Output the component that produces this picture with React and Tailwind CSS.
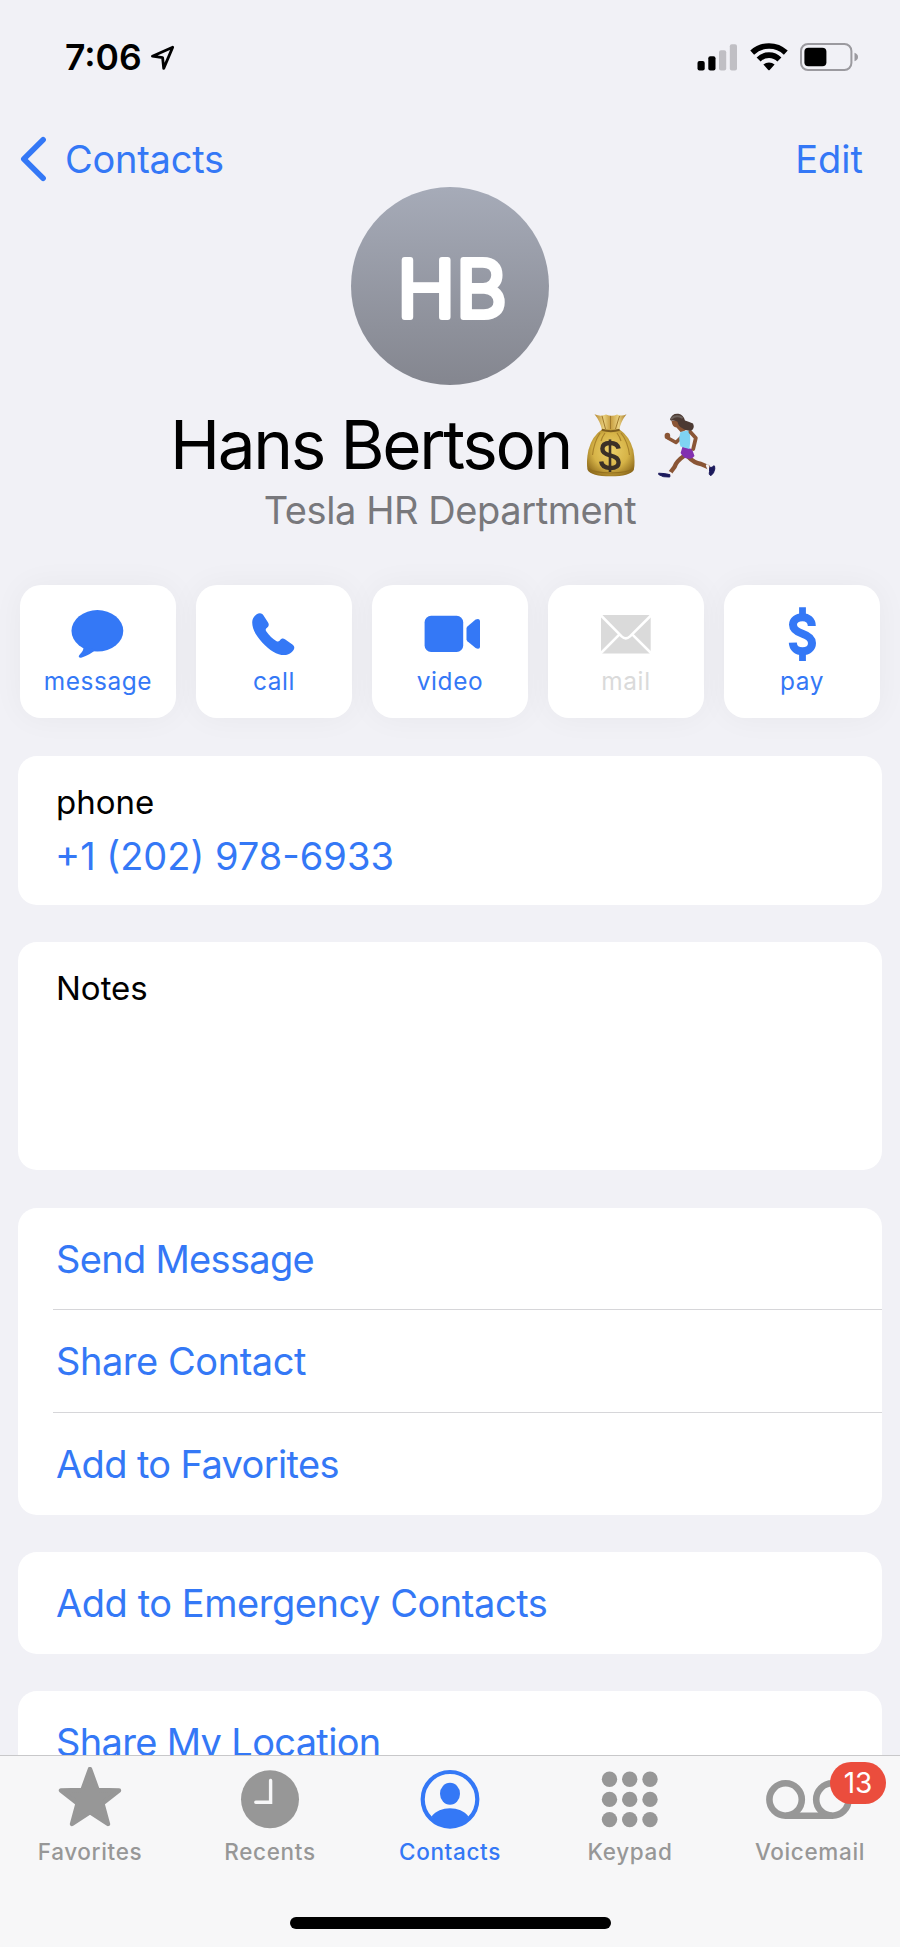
const BLUE = '#3478f6';

function LocationArrow() {
  return (
    <svg className="ml-[8px] h-[27px] w-[26px]" viewBox="0 0 26 27" fill="none" stroke="#000" strokeWidth="2.8" strokeLinejoin="round">
      <path d="M22.7 2.2 L2.4 11.2 L12.6 12.6 L13.7 23.4 Z" />
    </svg>
  );
}

function Signal() {
  return (
    <svg className="h-[28px] w-[41px]" viewBox="0 0 41 28">
      <rect x="0.5" y="18" width="7.2" height="9.5" rx="2" fill="#000" />
      <rect x="11.3" y="13.3" width="7.2" height="14.2" rx="2" fill="#000" />
      <rect x="22" y="7.3" width="7.2" height="20.2" rx="2" fill="#c0bfc4" />
      <rect x="32.8" y="1.2" width="7.2" height="26.3" rx="2" fill="#c0bfc4" />
    </svg>
  );
}

function Wifi() {
  return (
    <svg className="ml-[12px] h-[28px] w-[38px]" viewBox="0 0 38 28" fill="none" stroke="#000" strokeWidth="5.6">
      <path d="M2.2 9.6 A24.5 24.5 0 0 1 35.8 9.6" />
      <path d="M8.6 16.5 A14.6 14.6 0 0 1 29.4 16.5" />
      <path d="M13.4 21.6 A8.2 8.2 0 0 1 24.6 21.6 L19.7 26.9 Q19 27.6 18.3 26.9 Z" fill="#000" stroke="none" />
    </svg>
  );
}

function Battery() {
  return (
    <svg className="ml-[12px] h-[28px] w-[59px]" viewBox="0 0 59 28">
      <rect x="1" y="1" width="50.4" height="26" rx="7" fill="none" stroke="#9b9a9f" strokeWidth="2" />
      <rect x="4.4" y="4.7" width="22" height="18.6" rx="4" fill="#000" />
      <path d="M54.5 9.8 Q58 11 58 14 Q58 17 54.5 18.2 Z" fill="#9b9a9f" />
    </svg>
  );
}

function MoneyBag() {
  return (
    <svg className="ml-[14px] h-[66px] w-[52px] shrink-0" viewBox="0 0 52 66">
      <defs>
        <radialGradient id="bag" cx="0.5" cy="0.45" r="0.62">
          <stop offset="0" stopColor="#ecd068" />
          <stop offset="0.6" stopColor="#d6b347" />
          <stop offset="1" stopColor="#8f6b1c" />
        </radialGradient>
        <linearGradient id="neck" x1="0" x2="1">
          <stop offset="0" stopColor="#b78a35" />
          <stop offset="0.3" stopColor="#e8cf7c" />
          <stop offset="0.5" stopColor="#c79d3f" />
          <stop offset="0.75" stopColor="#ead17f" />
          <stop offset="1" stopColor="#a87c2b" />
        </linearGradient>
      </defs>
      <path d="M9.5 2.3 Q16 5 21 2.6 Q27 5 32 2.6 Q37 4.5 41.5 2.3 Q36 9 34.2 18 L17 18 Q15 9 9.5 2.3 Z" fill="url(#neck)" />
      <path d="M17 3.8 L20.5 17 M25.5 4 L25.5 17 M34.5 4 L30.5 17" stroke="#a17a2c" strokeWidth="1" fill="none" />
      <path d="M17 17.5 L34.5 17.5 Q44.5 24 48.3 38 Q50.5 50 48.8 58 Q45 64.3 25.7 64.3 Q6 64.3 2.6 58 Q1 50 3.4 38 Q7 24 17 17.5 Z" fill="url(#bag)" />
      <path d="M16.8 17.8 Q26 20.5 34.6 17.8" stroke="#7d5d1f" strokeWidth="2" fill="none" />
      <path d="M15 21 Q9 30 7.5 43 M36 21 Q43 30 44.5 43 M20 21 Q17 25 16 29 M32 21 Q35 25 36 29" stroke="#a9832b" strokeWidth="1.2" fill="none" />
      <path d="M3 56 Q8 61 25.7 61 Q43 61 48.6 56" stroke="#94701f" strokeWidth="1.2" fill="none" />
      <g fill="none" stroke="#3b3127">
        <path d="M33.6 36.6 Q32.4 31 25 31 Q17.4 31 17.4 36.8 Q17.4 41.6 25 43.4 Q33.6 45.2 33.6 50.4 Q33.6 56 25.2 56 Q17 56 16.2 49.6" strokeWidth="4.4" />
        <path d="M25 27.4 V60" strokeWidth="2.6" />
      </g>
    </svg>
  );
}

function Runner() {
  return (
    <svg className="ml-[21px] h-[66px] w-[60px] shrink-0" viewBox="0 0 60 66" fill="none" strokeLinecap="round" strokeLinejoin="round">
      <path d="M24.5 24 L18 30.5 L10 26" stroke="#8a5535" strokeWidth="3.6" />
      <ellipse cx="9.4" cy="24" rx="2.8" ry="3.2" fill="#8a5535" />
      <path d="M26 44 Q18.5 49 16.5 55 L12 61" stroke="#8a5535" strokeWidth="4.4" />
      <path d="M30 44.5 Q36 51 43 52 L50 55" stroke="#8a5535" strokeWidth="4.4" />
      <path d="M10.5 60.5 L13 62 M49.3 53.6 L50.8 57" stroke="#f4f2f5" strokeWidth="2.8" />
      <path d="M1 61.2 Q6 61.2 11.8 62.6 L11.8 65 Q5 65.6 1 62.8 Z" fill="#1c1a5c" stroke="#1c1a5c" strokeWidth="1" />
      <path d="M52 55.5 Q54.6 56 55.6 53.8 Q57 53 56.8 57 Q56 61.5 53.2 63.4 Q50.6 63.6 51.4 60 Z" fill="#1c1a5c" stroke="#1c1a5c" strokeWidth="1" />
      <path d="M24.5 34.8 L34 37 L36.5 44 Q34 47.5 30.5 46.5 Q26 47 22.6 41 Z" fill="#8230b0" />
      <path d="M22.5 19.5 L31.5 18.5 Q33 26 31.4 37 L22.5 34.4 Q20 28 22.5 19.5 Z" fill="#7fd3f2" />
      <path d="M32.4 20 L37.8 26 L35.2 37" stroke="#8a5535" strokeWidth="3.8" />
      <path d="M13.5 9 Q14.5 15.5 18.5 15.5 L22.5 20 L27.5 18.4 L24 7 Z" fill="#8a5535" />
      <path d="M12 7.5 Q14 1 20.5 1.8 Q25.5 3 27 8.5 Q31.5 10 35 11.5 Q37 16 33.5 18.6 Q28 19.5 24 16 Q20.5 14.5 19.5 9.8 Q16 8 13 8.8 Z" fill="#4c3a33" />
      <path d="M13.5 6.5 Q18 2.6 24 5.6" stroke="#6d625c" strokeWidth="2" />
    </svg>
  );
}

function MessageIcon() {
  return (
    <svg className="h-[60px] w-[60px]" viewBox="0 0 60 60" fill={BLUE}>
      <ellipse cx="29.4" cy="26.8" rx="25.9" ry="20.7" />
      <path d="M15.5 43.5 C15.5 47 13 49 11.2 51.2 C10 53 11.4 54.2 13.8 53.5 C19 52 24 49 28 45.5 Z" />
    </svg>
  );
}

function PhoneIcon() {
  return (
    <svg className="h-[60px] w-[60px]" viewBox="0 0 60 60" fill={BLUE}>
      <path d="M15.8 9.2 C12.3 9.3 8.2 13.6 8.2 18.2 C8.2 24.5 11.5 31.2 18.2 38.4 C25.5 46.2 33 51 40.2 51 C45 51 50.2 47.2 50.3 43.7 C50.3 42.3 49.6 41.2 48.4 40.4 L41.3 35.5 C38.9 34 37.6 34.4 35.8 36.4 C34.8 37.5 33.9 38 32.6 37.2 C28.6 34.8 25.2 31.4 22.2 27.2 C21.3 25.9 21.7 25 22.7 24.1 C24.9 22.2 25.4 20.6 23.9 18.2 L19.2 11 C18.3 9.8 17.2 9.1 15.8 9.2 Z" />
    </svg>
  );
}

function VideoIcon() {
  return (
    <svg className="h-[60px] w-[60px]" viewBox="0 0 60 60" fill={BLUE}>
      <rect x="4.6" y="11.8" width="38.6" height="36.2" rx="6.5" />
      <path d="M47.4 22.4 L55.6 15.6 Q57 14.8 58.2 14.9 Q60 15.2 60 17 V42.8 Q60 44.6 58.2 44.8 Q57 44.9 55.6 44 L47.4 37.2 Q46.5 36.4 46.5 35.2 V24.5 Q46.5 23.2 47.4 22.4 Z" />
    </svg>
  );
}

function MailIcon() {
  return (
    <svg className="h-[60px] w-[60px]" viewBox="0 0 60 60">
      <rect x="5" y="11" width="49.7" height="38.4" rx="1.5" fill="#dadada" />
      <g fill="none" stroke="#fff" strokeWidth="2.6">
        <path d="M4 10.5 L25.6 32.4 Q29.8 36.4 34 32.4 L56 10.5" />
        <path d="M4 50 L23.5 30.3 M56 50 L36.2 30.3" />
      </g>
    </svg>
  );
}

function PayIcon() {
  return (
    <svg className="h-[60px] w-[60px]" viewBox="0 0 60 60" fill="none" stroke={BLUE}>
      <path d="M30.5 3.3 V12 M30.5 48 V57" strokeWidth="6.8" />
      <path d="M39.8 22 C39.8 16.5 35.8 13.2 30.5 13.2 C25 13.2 21 16.3 21 20.7 C21 25.4 24.5 27.6 30.5 29.7 C36.5 31.8 40 34 40 39 C40 44 36 47.3 30.5 47.3 C25 47.3 21 44 20.8 38.6" strokeWidth="8" />
    </svg>
  );
}

function StarIcon() {
  return (
    <svg className="h-16 w-16" viewBox="0 0 64 64" fill="#979797" stroke="#979797" strokeWidth="4.4" strokeLinejoin="round">
      <path d="M32 2 L39.6 22.9 L61 23.4 L44.4 36.4 L50 57 L32 45.2 L14 57 L19.6 36.4 L3 23.4 L24.4 22.9 Z" />
    </svg>
  );
}

function ClockIcon() {
  return (
    <svg className="h-16 w-16" viewBox="0 0 64 64">
      <circle cx="32" cy="32.3" r="29" fill="#979797" />
      <path d="M32.6 13.5 V35.2 H17.8" fill="none" stroke="#f7f7f8" strokeWidth="3.4" strokeLinecap="round" strokeLinejoin="miter" />
    </svg>
  );
}

function PersonIcon() {
  return (
    <svg className="h-16 w-16" viewBox="0 0 64 64" fill={BLUE}>
      <circle cx="32" cy="32.3" r="27.3" fill="none" stroke={BLUE} strokeWidth="4.2" />
      <ellipse cx="32" cy="26.8" rx="10" ry="11" />
      <path d="M13.5 49.5 C18 44 24.5 41.3 32 41.3 C39.5 41.3 46 44 50.5 49.5 C46 56.5 39.5 60 32 60 C24.5 60 18 56.5 13.5 49.5 Z" />
    </svg>
  );
}

function KeypadIcon() {
  return (
    <svg className="h-16 w-16" viewBox="0 0 64 64" fill="#979797">
      {[12.2, 32.4, 52.6].map((y) =>
        [11.5, 31.7, 52].map((x) => <circle key={`${x}-${y}`} cx={x} cy={y} r="7.7" />)
      )}
    </svg>
  );
}

function VoicemailIcon() {
  return (
    <svg className="h-16 w-24" viewBox="0 0 96 64" fill="none" stroke="#979797" strokeWidth="6.6">
      <circle cx="23.6" cy="32.5" r="16.2" />
      <circle cx="70.4" cy="32.5" r="16.2" />
      <path d="M23.6 48.7 H70.4" />
    </svg>
  );
}

const actions = [
  { label: 'message', Icon: MessageIcon, color: 'text-[#3478f6]' },
  { label: 'call', Icon: PhoneIcon, color: 'text-[#3478f6]' },
  { label: 'video', Icon: VideoIcon, color: 'text-[#3478f6]' },
  { label: 'mail', Icon: MailIcon, color: 'text-[#dadada]' },
  { label: 'pay', Icon: PayIcon, color: 'text-[#3478f6]' },
];

const tabs = [
  { label: 'Favorites', Icon: StarIcon },
  { label: 'Recents', Icon: ClockIcon },
  { label: 'Contacts', Icon: PersonIcon, active: true },
  { label: 'Keypad', Icon: KeypadIcon },
  { label: 'Voicemail', Icon: VoicemailIcon, badge: '13' },
];

function Row({ children, tracking }) {
  return (
    <button className={`flex h-[102px] w-full items-center pl-[38px] text-left text-[38px] text-[#3478f6] ${tracking}`}>
      {children}
    </button>
  );
}

export default function App() {
  return (
    <div className="flex h-[1947px] w-[900px] flex-col overflow-hidden bg-[#f1f1f6] font-['Inter',sans-serif] text-black">
      <div className="flex h-[1755px] flex-col overflow-hidden">
        <div className="flex h-[114px] shrink-0 items-center justify-between pr-[41px] pl-[65px]">
          <div className="flex items-center pt-[2px] text-[35.5px] font-semibold">
            7:06
            <LocationArrow />
          </div>
          <div className="flex items-center">
            <Signal />
            <Wifi />
            <Battery />
          </div>
        </div>

        <div className="flex h-[73px] shrink-0 items-center justify-between pt-[17px] pr-[37px] pl-[20px] text-[38px] text-[#3478f6]">
          <button className="flex items-center">
            <svg className="h-[48px] w-[28px]" viewBox="0 0 28 48" fill="none" stroke={BLUE} strokeWidth="5.6" strokeLinecap="round" strokeLinejoin="round">
              <path d="M23.1 4.8 L3.8 24 L23.1 43.2" />
            </svg>
            <span className="ml-[17px] tracking-[-0.25px]">Contacts</span>
          </button>
          <button>Edit</button>
        </div>

        <div className="flex shrink-0 flex-col items-center">
          <svg className="h-[198px] w-[198px] rounded-full bg-linear-to-b from-[#a6abb8] to-[#84868f]" viewBox="0 0 198 198">
            <text x="101.5" y="129.8" textAnchor="middle" fill="#fff" stroke="#fff" strokeWidth="6" strokeLinejoin="round" className="text-[78px] font-light tracking-[1px]">
              HB
            </text>
          </svg>
          <div className="mt-[20px] flex h-[80px] items-center pr-[12px]">
            <h1 className="text-[67.4px] leading-[80px] tracking-[-2.35px] whitespace-nowrap">Hans Bertson</h1>
            <MoneyBag />
            <Runner />
          </div>
          <p className="text-[38px] leading-[50px] tracking-[-0.42px] text-[#78787c]">Tesla HR Department</p>
        </div>

        <div className="mx-[20px] mt-[50px] grid shrink-0 grid-cols-5 gap-[20px]">
          {actions.map(({ label, Icon, color }) => (
            <button key={label} className={`flex h-[133px] flex-col items-center rounded-[21px] bg-white pt-[19px] shadow-[0_0_32px_rgba(0,0,0,0.045)] ${color}`}>
              <Icon />
              <span className="mt-[2px] text-[24.4px] leading-[30px] tracking-[0.6px]">{label}</span>
            </button>
          ))}
        </div>

        <div className="mx-[18px] mt-[38px] h-[149px] shrink-0 rounded-[19px] bg-white pt-[24px] pl-[38px]">
          <div className="text-[33px] leading-[44px]">phone</div>
          <div className="mt-[7px] -ml-px text-[38px] leading-[50px] text-[#3478f6]">+1 (202) 978-6933</div>
        </div>

        <div className="mx-[18px] mt-[37px] h-[228px] shrink-0 rounded-[19px] bg-white pt-[24px] pl-[38px]">
          <div className="text-[33px] leading-[44px]">Notes</div>
        </div>

        <div className="mx-[18px] mt-[38px] shrink-0 rounded-[19px] bg-white">
          <Row tracking="tracking-[-0.7px]">Send Message</Row>
          <div className="-mt-px ml-[35px] h-px bg-[#d6d6d9]" />
          <Row tracking="tracking-[-0.45px]">Share Contact</Row>
          <div className="ml-[35px] h-px bg-[#d6d6d9]" />
          <Row tracking="tracking-[-0.63px]">Add to Favorites</Row>
        </div>

        <div className="mx-[18px] mt-[37px] shrink-0 rounded-[19px] bg-white">
          <Row tracking="tracking-[-0.45px]">Add to Emergency Contacts</Row>
        </div>

        <div className="mx-[18px] mt-[37px] shrink-0 rounded-[19px] bg-white">
          <Row tracking="tracking-[-0.66px]">Share My Location</Row>
        </div>
      </div>

      <nav className="h-[192px] border-t border-[#c8c8ca] bg-[#f7f7f8] pt-[11px]">
        <div className="grid grid-cols-5">
          {tabs.map(({ label, Icon, active, badge }) => (
            <button key={label} className={`relative flex flex-col items-center ${active ? 'text-[#3478f6]' : 'text-[#979797]'}`}>
              <Icon />
              <span className="mt-[6px] text-[22.5px] leading-[30px] font-medium tracking-[0.65px]">{label}</span>
              {badge && (
                <span className="absolute -top-[5px] left-[110px] flex h-[42px] w-[56px] items-center justify-center rounded-full bg-[#eb4d3d] text-[28px] leading-none text-white">
                  {badge}
                </span>
              )}
            </button>
          ))}
        </div>
        <div className="mx-auto mt-[50px] h-[12px] w-[321px] rounded-full bg-black" />
      </nav>
    </div>
  );
}
